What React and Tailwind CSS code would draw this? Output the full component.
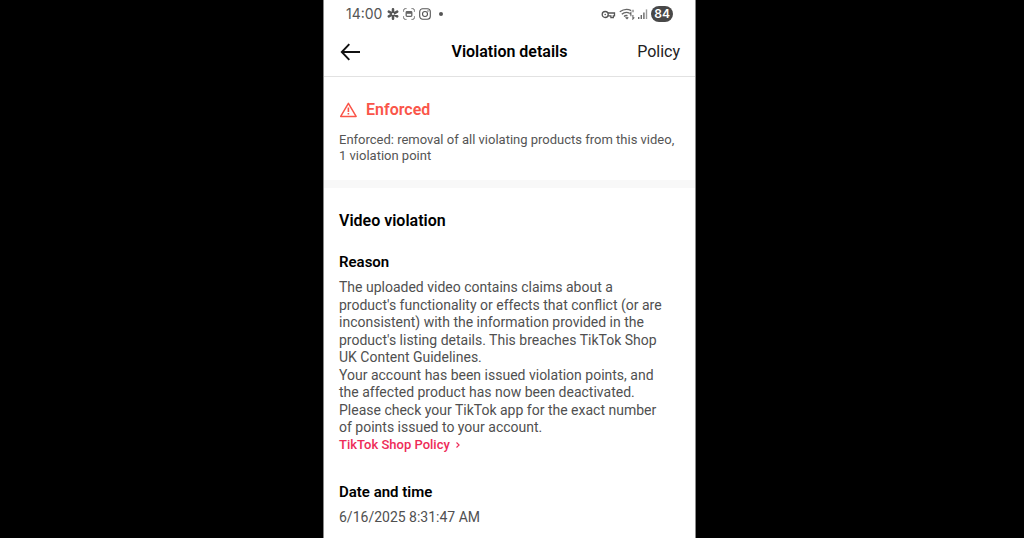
function StatusBar() {
  return (
    <div className="flex h-7 items-center justify-between px-[22px] text-sm text-[#555]">
      <div className="flex items-center gap-1">
        <span className="pr-px font-['Inter',sans-serif]">14:00</span>
        <svg className="size-3" viewBox="0 0 12 12" fill="none" stroke="#555" aria-hidden="true">
          <path d="M6 1.2v9.6M1.8 3.6l8.4 4.8M10.2 3.6 1.8 8.4" strokeWidth="2.5" strokeLinecap="round" />
          <circle cx="6" cy="6" r="1.1" fill="#fff" stroke="none" />
        </svg>
        <svg className="size-3" viewBox="0 0 12 12" fill="none" stroke="#666" strokeWidth="1" aria-hidden="true">
          <path d="M3.5.6H2.4A1.8 1.8 0 0 0 .6 2.4v1.3M8.5.6h1.1a1.8 1.8 0 0 1 1.8 1.8v1.3M3.5 11.4H2.4A1.8 1.8 0 0 1 .6 9.6V8.3M8.5 11.4h1.1a1.8 1.8 0 0 0 1.8-1.8V8.3" />
          <rect x="3.2" y="3.7" width="5.6" height="4.6" rx=".8" strokeWidth="1.3" />
          <path d="M3.2 4.8h5.6" strokeWidth="2" />
        </svg>
        <svg className="size-3" viewBox="0 0 12 12" fill="none" stroke="#555" strokeWidth="1.1" aria-hidden="true">
          <rect x=".7" y=".7" width="10.6" height="10.6" rx="3" />
          <circle cx="6" cy="6" r="2.5" />
          <circle cx="9" cy="3" r=".7" fill="#555" stroke="none" />
        </svg>
        <span className="ml-1 size-1 rounded-full bg-[#555]" />
      </div>
      <div className="flex items-center gap-0.5">
        <svg className="h-3 w-4" viewBox="0 0 16 12" fill="none" stroke="#555" strokeWidth="1.3" aria-hidden="true">
          <circle cx="4.2" cy="6.5" r="3" />
          <circle cx="4.2" cy="6.5" r=".8" fill="#555" stroke="none" />
          <path d="M6.9 5h6.6v2.8h-1.2v1.8H9.9V7.9H7" />
        </svg>
        <svg className="h-3 w-4" viewBox="0 0 16 12" fill="none" stroke="#666" strokeWidth="1.3" aria-hidden="true">
          <path d="M.8 3.8C4.4 1.2 9 .9 12.2 2.6M2.8 6.3c2.2-2 5.1-2.4 7.7-1.2M5 8.5c1-.9 2.3-1.2 3.5-.8" />
          <path d="m6.6 9.2 1.4 1.3 1.2-1.3" />
          <path d="M11.9 8.3V4.6l-1.4 1.5M13.9 7v4l1.4-1.6M14 1.8v2.4" strokeWidth="1.1" />
        </svg>
        <svg className="h-3 w-3" viewBox="0 0 12 12" fill="#666" aria-hidden="true">
          <path d="M1 9h1.4v2H1zM3.6 7H5v4H3.6zM6.2 4.4h1.4V11H6.2z" />
          <path d="M8.8 1.4h1.4V11H8.8z" opacity=".65" />
        </svg>
        <span className="flex h-4 items-center rounded-full bg-[#484848] px-[3px] font-['Inter',sans-serif] text-xs font-semibold text-white">
          84
        </span>
      </div>
    </div>
  );
}

function Header() {
  return (
    <header className="grid h-[49px] grid-cols-[1fr_auto_1fr] items-center border-b border-[#e2e2e2] px-[15px] text-base text-black">
      <button type="button" aria-label="Back" className="justify-self-start">
        <svg className="size-[22px]" viewBox="0 0 22 22" fill="none" stroke="#111" strokeWidth="1.9" aria-hidden="true">
          <path d="M10.3 3.2 2.8 11l7.5 7.8M2.9 11H21" />
        </svg>
      </button>
      <h1 className="font-semibold">Violation details</h1>
      <a href="#policy" className="justify-self-end text-[#222]">
        Policy
      </a>
    </header>
  );
}

export default function App() {
  return (
    <div className="flex h-screen justify-center overflow-hidden bg-black pr-[5px] font-['Roboto',sans-serif]">
      <div className="w-full max-w-[373px] border-x border-[#8a8a8a] bg-white">
        <StatusBar />
        <Header />
        <main>
          <section className="border-b-8 border-[#f8f8f8] px-[15px] pb-4 pt-[21px]">
            <h2 className="flex items-center gap-[9px] text-base font-semibold text-[#fa5549]">
              <svg className="h-4 w-[18px]" viewBox="0 0 18 16" fill="none" stroke="#fa5549" strokeWidth="1.5" strokeLinejoin="round" aria-hidden="true">
                <path d="M9.4 1.3 17.1 14.4H1.7z" />
                <path d="M9.4 5.4v4.5M9.4 11v1.6" strokeWidth="1.6" />
              </svg>
              Enforced
            </h2>
            <p className="mt-2.5 text-[13px] leading-4 text-[#555]">
              Enforced: removal of all violating products from this video, 1 violation point
            </p>
          </section>
          <section className="px-[15px] pt-[21px]">
            <h2 className="text-base font-semibold text-black">Video violation</h2>
            <h3 className="mt-[19px] text-[15px] font-semibold leading-5 text-black">Reason</h3>
            <div className="mt-[7px] pr-3.5 text-sm leading-tight text-[#505050]">
              <p>
                The uploaded video contains claims about a product's functionality or effects that conflict (or are
                inconsistent) with the information provided in the product's listing details. This breaches TikTok Shop
                UK Content Guidelines.
              </p>
              <p>
                Your account has been issued violation points, and the affected product has now been deactivated. Please
                check your TikTok app for the exact number of points issued to your account.
              </p>
            </div>
            <a href="#shop-policy" className="flex items-center gap-1.5 text-[13px] font-medium leading-4 text-[#ee2b58]">
              TikTok Shop Policy
              <svg className="h-2 w-1" viewBox="0 0 4 8" fill="none" stroke="#ee2b58" strokeWidth="1.1" aria-hidden="true">
                <path d="m.5 1.5 2.6 2.5L.5 6.5" />
              </svg>
            </a>
            <h3 className="mt-[29px] text-[15px] font-semibold leading-5 text-black">Date and time</h3>
            <p className="mt-[5px] text-sm text-[#505050]">6/16/2025 8:31:47 AM</p>
          </section>
        </main>
      </div>
    </div>
  );
}
